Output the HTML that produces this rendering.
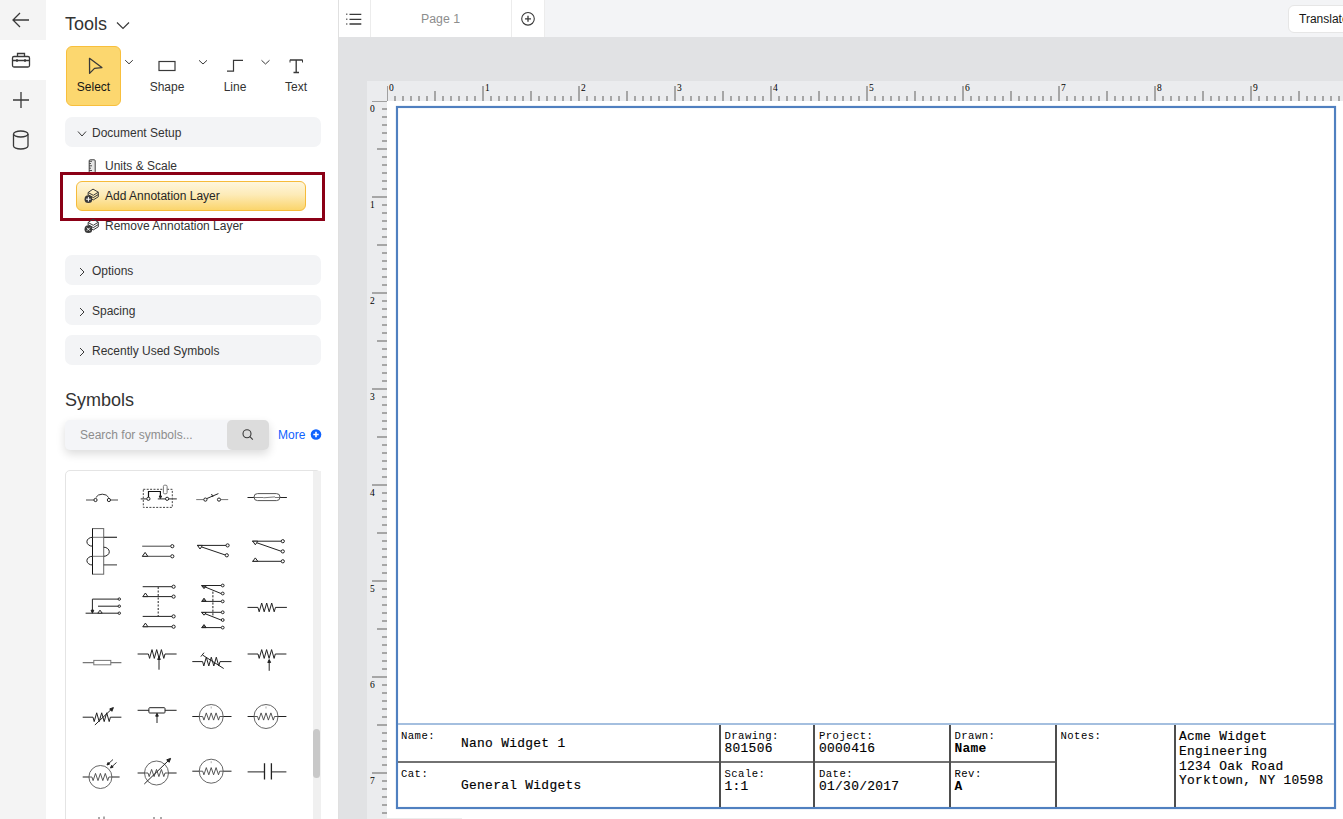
<!DOCTYPE html>
<html><head><meta charset="utf-8">
<style>
*{box-sizing:border-box;margin:0;padding:0}
html,body{width:1343px;height:819px;overflow:hidden;background:#fff;font-family:"Liberation Sans",sans-serif;color:#262626}
.a{position:absolute}
.t{position:absolute;white-space:nowrap;line-height:1}
#rail{left:0;top:0;width:46px;height:819px;background:#f4f4f4}
#railact{left:0;top:40px;width:46px;height:40px;background:#fff}
#panel{left:46px;top:0;width:292px;height:819px;background:#fff}
#pborder{left:338px;top:0;width:1px;height:819px;background:#e0e0e0}
.acc{position:absolute;left:65px;width:256px;height:30px;background:#f3f4f6;border-radius:7px}
.lbl{font-size:12px;color:#333}
#canvas{left:339px;top:37px;width:1004px;height:782px;background:#e1e2e4}
#topbar{left:339px;top:0;width:1004px;height:37px;background:#f3f4f6}
.mono{font-family:"Liberation Mono",monospace;color:#000}
</style></head>
<body>
<div class="a" id="rail"></div>
<div class="a" id="railact"></div>
<!-- rail icons -->
<svg class="a" style="left:0;top:0" width="46" height="160" viewBox="0 0 46 160" fill="none" stroke="#393939" stroke-width="1.3">
  <path d="M13 20 H29 M20 13 L13 20 L20 27"/>
  <rect x="12.5" y="56.5" width="17" height="10.5" rx="1.5"/>
  <path d="M17.5 56.5 V53.5 H24.5 V56.5 M12.5 60.5 H29.5 M17 59 V62 M25 59 V62"/>
  <path d="M21 92 V108 M13 100 H29"/>
  <ellipse cx="20.75" cy="134" rx="7.25" ry="3"/>
  <path d="M13.5 134 V146 A7.25 3 0 0 0 28 146 V134"/>
</svg>

<div class="a" id="panel"></div>
<div class="a" id="pborder"></div>

<div class="t" style="left:65px;top:14.6px;font-size:18px;color:#333">Tools</div>
<svg class="a" style="left:116px;top:21px" width="14" height="9" viewBox="0 0 14 9" fill="none" stroke="#393939" stroke-width="1.2"><path d="M1 1.5 L7 7.5 L13 1.5"/></svg>

<!-- select button -->
<div class="a" style="left:66px;top:46px;width:55px;height:60px;background:#fcd76f;border:1px solid #f8bf3c;border-radius:6px"></div>
<svg class="a" style="left:80px;top:52px" width="60" height="28" viewBox="0 0 60 28" fill="none" stroke="#393939" stroke-width="1.25" stroke-linejoin="round">
  <path d="M9.5 6.3 L21.9 15.6 L14.5 16.4 L9.6 21.4 Z" stroke-linejoin="round" stroke-width="1.3"/>
  <path d="M45.2 8.2 L49 11.8 L52.8 8.2" stroke-width="1"/>
</svg>
<div class="t lbl" style="left:76.5px;top:81.2px;width:34px;text-align:center;color:#161616">Select</div>

<svg class="a" style="left:130px;top:40px" width="200" height="40" viewBox="0 0 200 40" fill="none" stroke="#393939" stroke-width="1.2">
  <rect x="29" y="21.5" width="16" height="9"/>
  <path d="M69 20.3 L73 24 L77 20.3" stroke-width="1"/>
  <path d="M97 31.2 H103.5 V20.3 H113" />
  <path d="M131.5 20.3 L135.5 24 L139.5 20.3" stroke-width="1"/>
  <path d="M160 20 H172.5 M166.2 20 V32.5 M163.5 32.5 H169" stroke-width="1.35"/>
  <path d="M160 19.8 V22.5 M172.5 19.8 V22.5" stroke-width="1"/>
</svg>
<div class="t lbl" style="left:147px;top:81.2px;width:40px;text-align:center">Shape</div>
<div class="t lbl" style="left:215px;top:81.2px;width:40px;text-align:center">Line</div>
<div class="t lbl" style="left:276px;top:81.2px;width:40px;text-align:center">Text</div>

<!-- Document setup -->
<div class="acc" style="top:117px"></div>
<svg class="a" style="left:76px;top:128px" width="12" height="12" viewBox="0 0 12 12" fill="none" stroke="#393939" stroke-width="1"><path d="M2 3.5 L6 8 L10 3.5"/></svg>
<div class="t lbl" style="left:92px;top:127px">Document Setup</div>

<svg class="a" style="left:82px;top:155px" width="20" height="20" viewBox="0 0 20 20" fill="none" stroke="#3d3d3d" stroke-width="1"><rect x="7.2" y="4.8" width="6" height="13" rx="1" fill="#e6e6e6"/><path d="M7.2 6.3 H10 M7.2 8.5 H9 M7.2 10.8 H10 M7.2 13.2 H9 M7.2 15.5 H10" stroke-width="0.9"/></svg>
<div class="t lbl" style="left:105px;top:160.3px">Units &amp; Scale</div>

<!-- red highlight -->
<div class="a" style="left:60px;top:172px;width:265px;height:49px;border:3px solid #8b0016"></div>
<div class="a" style="left:76px;top:181px;width:230px;height:30px;border:1px solid #f6bb3a;border-radius:6px;background:linear-gradient(#fef6dd 0%,#fdebb8 45%,#fbd56c 100%)"></div>
<svg class="a" style="left:82px;top:186px" width="20" height="20" viewBox="0 0 20 20" fill="none" stroke="#393939" stroke-width="1" stroke-linejoin="round"><path d="M6.1 11.1 L11.3 13.9 L16.3 10.8 M6.1 8.8 L11.3 11.6 L16.3 8.5 M16.3 6.2 V10.8"/><path d="M11 3.1 L6.1 6.5 L11.3 9.3 L16.3 6.2 Z"/><path d="M6.1 6.5 V9"/><circle cx="6.4" cy="13.2" r="3.85" fill="#393939" stroke="none"/><path d="M6.4 10.9 V15.5 M4.1 13.2 H8.7" stroke="#fff" stroke-width="1"/></svg>
<div class="t lbl" style="left:105px;top:190px;color:#262626">Add Annotation Layer</div>

<svg class="a" style="left:82px;top:216px" width="20" height="20" viewBox="0 0 20 20" fill="none" stroke="#393939" stroke-width="1" stroke-linejoin="round"><path d="M6.1 11.1 L11.3 13.9 L16.3 10.8 M6.1 8.8 L11.3 11.6 L16.3 8.5 M16.3 6.2 V10.8"/><path d="M11 3.1 L6.1 6.5 L11.3 9.3 L16.3 6.2 Z"/><path d="M6.1 6.5 V9"/><circle cx="6.4" cy="13.2" r="3.85" fill="#393939" stroke="none"/><path d="M4.9 11.7 L7.9 14.7 M7.9 11.7 L4.9 14.7" stroke="#fff" stroke-width="1"/></svg>
<div class="t lbl" style="left:105px;top:220.3px">Remove Annotation Layer</div>

<div class="acc" style="top:255px"></div>
<div class="acc" style="top:295px"></div>
<div class="acc" style="top:335px"></div>
<svg class="a" style="left:76px;top:262px" width="12" height="100" viewBox="0 0 12 100" fill="none" stroke="#393939" stroke-width="1">
  <path d="M4 6 L8 10 L4 14"/>
  <path d="M4 46 L8 50 L4 54"/>
  <path d="M4 86 L8 90 L4 94"/>
</svg>
<div class="t lbl" style="left:92px;top:265.3px">Options</div>
<div class="t lbl" style="left:92px;top:305.3px">Spacing</div>
<div class="t lbl" style="left:92px;top:345.3px">Recently Used Symbols</div>

<div class="t" style="left:65px;top:390.8px;font-size:18px;color:#333">Symbols</div>

<!-- search -->
<div class="a" style="left:65px;top:420px;width:204px;height:30px;background:#f4f5f8;border-radius:5px;box-shadow:0 4px 10px rgba(0,0,0,0.14)"></div>
<div class="a" style="left:227px;top:420px;width:42px;height:30px;background:#dcdcdc;border-radius:5px"></div>
<svg class="a" style="left:240px;top:428px" width="16" height="16" viewBox="0 0 16 16" fill="none" stroke="#393939" stroke-width="1.1"><circle cx="7" cy="5.8" r="4"/><path d="M9.9 8.7 L12.8 11.6"/></svg>
<div class="t lbl" style="left:80px;top:428.8px;color:#8d8d8d">Search for symbols...</div>
<div class="t lbl" style="left:278px;top:428.8px;color:#0f62fe">More</div>
<svg class="a" style="left:309px;top:428px" width="14" height="14" viewBox="0 0 14 14"><circle cx="7" cy="6.5" r="5.3" fill="#0f62fe"/><path d="M7 3.8 V9.2 M4.3 6.5 H9.7" stroke="#fff" stroke-width="1.6"/></svg>

<!-- symbols panel -->
<div class="a" style="left:65px;top:470px;width:256px;height:360px;border:1px solid #e4e4e4;border-radius:5px;background:#fff"></div>
<div class="a" style="left:313px;top:471px;width:8px;height:350px;background:#f0f0f0"></div>
<div class="a" style="left:313px;top:729px;width:7px;height:49px;background:#c8c8c8;border-radius:4px"></div>
<svg class="a" style="left:65px;top:470px" width="256" height="349" viewBox="65 470 256 349" fill="none" stroke="#222" stroke-width="1"><path d="M86 500 H93.9 M110.5 500 H118" stroke="#888" stroke-width="1.4"/><path d="M95.8 497.6 A7.2 6 0 0 1 108.8 497.6" stroke="#333"/><circle cx="95.5" cy="500" r="1.6" fill="#fff"/><circle cx="108.9" cy="500" r="1.6" fill="#fff"/><rect x="143.3" y="489.3" width="29" height="18.1" stroke-dasharray="2 1.4" stroke="#444"/><path d="M140.7 498.8 H146.7 M157.8 498.8 H165.5 M168.8 498.8 H176.8" stroke="#555" stroke-width="1.2"/><circle cx="148.4" cy="498.8" r="1.6" fill="#fff"/><circle cx="167.1" cy="498.8" r="1.6" fill="#fff"/><rect x="163.4" y="485.2" width="3.7" height="8.6" rx="1.2" fill="#fff" stroke="#777"/><path d="M148.5 497.2 V491.5 H160.4 V496.5" stroke-width="1.2" stroke="#111"/><path d="M160.4 498.6 L159.2 496.0 L161.6 496.0 Z" fill="#222"/><path d="M196.2 499.6 H203.8 M220.6 499.6 H228.2" stroke="#777"/><path d="M206.5 498.7 L218.4 493.6 M211.5 494 L213 497"/><circle cx="205.4" cy="499.6" r="1.6" fill="#fff"/><circle cx="219" cy="499.6" r="1.6" fill="#fff"/><path d="M247.5 497.5 H254 M280 497.5 H286.9" stroke="#222"/><rect x="254" y="493.6" width="26" height="7" rx="3.5" fill="none" stroke="#555"/><path d="M254 497.5 H263.5 M263.5 497.8 L275 496.9 M275 497.5 H280" stroke="#555" stroke-width="0.8"/><rect x="92.5" y="528.6" width="11.2" height="45.6" stroke="#666"/><path d="M92.5 528.6 V574.2" stroke="#111"/><path d="M92.5 537.3 H117 M92.5 556.3 H103.7" stroke="#777"/><path d="M103.7 537.3 H117 M103.7 564.9 H117" stroke="#333"/><path d="M92.5 537.3 A5.6 4.45 0 0 0 92.5 546.2 M103.7 547.2 A5.6 4.55 0 0 1 103.7 556.3 M92.5 556.3 A5.6 4.35 0 0 0 92.5 565" stroke="#222"/><path d="M142.2 546.2 H170.5 M142.2 556.3 H170.5" stroke="#444"/><circle cx="172.3" cy="546.2" r="1.6" fill="#fff"/><circle cx="172.3" cy="556.3" r="1.6" fill="#fff"/><path d="M142.4 556.3 L145.1 552.4 L147.8 556.3 Z" fill="#fff"/><path d="M197 545.4 H226 M197 545.4 L225 554.9"/><circle cx="227.6" cy="545.4" r="1.6" fill="#fff"/><circle cx="226.8" cy="555.3" r="1.6" fill="#fff"/><path d="M197.5 545.4 L202.5 545.4 L200 549 Z" fill="#fff"/><path d="M252.3 541.2 H281 M252.3 541.2 L281 551.2 M252.3 561.3 H281"/><circle cx="282.8" cy="541.2" r="1.6" fill="#fff"/><circle cx="282.8" cy="551.4" r="1.6" fill="#fff"/><circle cx="282.8" cy="561.3" r="1.6" fill="#fff"/><path d="M252.8 541.2 L257.8 541.2 L255.3 544.8 Z" fill="#fff"/><path d="M252.8 561.3 L255.3 557.9 L257.8 561.3 Z" fill="#fff"/><path d="M92.4 599.1 H118.5 M98 606.2 H118.5 M85.6 613.2 H118.5 M92.4 599.1 V611"/><path d="M92.4 613.2 L91.1 610.2 L93.8 610.2 Z" fill="#222"/><circle cx="119.3" cy="599.1" r="1.2" fill="#fff"/><circle cx="119.3" cy="606.2" r="1.2" fill="#fff"/><circle cx="119.3" cy="613.2" r="1.2" fill="#fff"/><path d="M97.8 613.2 L100.0 610.2 L102.2 613.2 Z" fill="#fff"/><path d="M142.7 586.7 H172 M142.7 596.6 H172 M142.7 616.4 H172 M142.7 626.7 H172"/><path d="M158.2 587 V616" stroke-dasharray="2 1.5"/><circle cx="173.6" cy="586.7" r="1.6" fill="#fff"/><circle cx="173.6" cy="596.6" r="1.6" fill="#fff"/><circle cx="173.6" cy="616.4" r="1.6" fill="#fff"/><circle cx="173.6" cy="626.7" r="1.6" fill="#fff"/><path d="M142.9 596.6 L145.4 593.0 L147.9 596.6 Z" fill="#fff"/><path d="M142.9 626.7 L145.4 623.1 L147.9 626.7 Z" fill="#fff"/><path d="M201.5 585.5 H221 M201.5 585.5 L221 593.5 M201.5 601.4 H221 M201.5 612.3 H221 M201.5 612.3 L221 620 M201.5 627.6 H221"/><path d="M212.9 591.6 V617" stroke-dasharray="2.2 1.4"/><circle cx="222.7" cy="585.5" r="1.4" fill="#fff"/><circle cx="222.7" cy="593.5" r="1.4" fill="#fff"/><circle cx="222.7" cy="601.4" r="1.4" fill="#fff"/><circle cx="222.7" cy="612.3" r="1.4" fill="#fff"/><circle cx="222.7" cy="620" r="1.4" fill="#fff"/><circle cx="222.7" cy="627.6" r="1.4" fill="#fff"/><path d="M201.8 585.8 L206.3 585.8 L204 588.6 Z" fill="#666"/><path d="M201.8 612.6 L206.3 612.6 L204 615.2 Z" fill="#fff"/><path d="M201.8 601.4 L204.0 598.1999999999999 L206.20000000000002 601.4 Z" fill="#666"/><path d="M201.8 627.6 L204.0 624.6 L206.20000000000002 627.6 Z" fill="#666"/><path d="M247.5 607.4 H257.9 M257.9 607.4 L259.2 611.8 L261.7 603.0 L264.2 611.8 L266.7 603.0 L269.2 611.8 L271.7 603.0 L274.2 611.8 L275.5 607.4 M275.5 607.4 H286.9"/><path d="M82.7 662.6 H93.8 M110.8 662.6 H121.4" stroke="#777" stroke-width="1.3"/><rect x="93.8" y="660.4" width="17" height="4.4" stroke="#777"/><path d="M137.6 654 H148.4 M148.4 654.0 L149.6 658.4 L152.0 649.6 L154.3 658.4 L156.7 649.6 L159.1 658.4 L161.4 649.6 L163.8 658.4 L165.0 654.0 M165 654 H176.6 M159 669.7 V659"/><path d="M159.0 656.5 L160.3 659.5 L157.7 659.5 Z" fill="#222"/><path d="M192.3 661.6 H202.6 M202.6 661.6 L203.8 666.0 L206.3 657.2 L208.8 666.0 L211.3 657.2 L213.8 666.0 L216.3 657.2 L218.8 666.0 L220.0 661.6 M220 661.6 H231.5 M202.8 655.2 L223.7 668.5 M200.9 656.6 L204 652.7"/><path d="M247.6 654 H258 M258.0 654.0 L259.2 658.4 L261.7 649.6 L264.2 658.4 L266.6 649.6 L269.1 658.4 L271.6 649.6 L274.1 658.4 L275.3 654.0 M275.3 654 H286.4 M269.2 670.8 V662"/><path d="M269.2 659.5 L270.6 662.5 L267.8 662.5 Z" fill="#222"/><path d="M82.7 717.2 H93 M93.0 717.2 L94.2 721.6 L96.7 712.8 L99.2 721.6 L101.7 712.8 L104.2 721.6 L106.7 712.8 L109.2 721.6 L110.4 717.2 M110.4 717.2 H121.4 M94.9 725 L111.5 709.2"/><path d="M113.4 707.6 L111.9 711.3 L109.7 708.9 Z" fill="#222"/><path d="M137.6 710.3 H148.9 M165 710.3 H176.6 M157 723 V715.5"/><rect x="148.9" y="707.7" width="16.1" height="5.3" rx="0.8"/><path d="M157.0 713.2 L158.3 716.2 L155.7 716.2 Z" fill="#222"/><path d="M192.3 716.5 H199.2 M223.2 716.5 H231.5"/><circle cx="211.2" cy="716.5" r="12" stroke="#555" stroke-width="0.9"/><path d="M199.2 716.5 H202.7 M202.7 716.5 L203.9 720.1 L206.3 712.9 L208.8 720.1 L211.2 712.9 L213.6 720.1 L216.1 712.9 L218.5 720.1 L219.7 716.5 M219.7 716.5 H223.2" stroke="#444" stroke-width="0.9"/><path d="M211.2 706.5 V708.5" stroke="#999" stroke-width="0.8"/><path d="M247.6 716.5 H254 M278 716.5 H286.4"/><circle cx="266" cy="716.5" r="12" stroke="#555" stroke-width="0.9"/><path d="M254 716.5 H257.5 M257.5 716.5 L258.7 720.1 L261.1 712.9 L263.6 720.1 L266.0 712.9 L268.4 720.1 L270.9 712.9 L273.3 720.1 L274.5 716.5 M274.5 716.5 H278" stroke="#444" stroke-width="0.9"/><path d="M266 706.5 V708.5" stroke="#999" stroke-width="0.8"/><path d="M192.3 771.2 H199.2 M223.2 771.2 H231.5"/><circle cx="211.2" cy="771.2" r="12" stroke="#555" stroke-width="0.9"/><path d="M199.2 771.2 H202.7 M202.7 771.2 L203.9 774.8 L206.3 767.6 L208.8 774.8 L211.2 767.6 L213.6 774.8 L216.1 767.6 L218.5 774.8 L219.7 771.2 M219.7 771.2 H223.2" stroke="#444" stroke-width="0.9"/><path d="M211.2 761.2 V763.2" stroke="#999" stroke-width="0.8"/><path d="M82.7 777 H88.9 M111.9 777 H119.6"/><circle cx="100.4" cy="777" r="11.5" stroke="#555" stroke-width="0.9"/><path d="M88.9 777 H91.9 M91.9 777.0 L93.1 780.6 L95.5 773.4 L98.0 780.6 L100.4 773.4 L102.8 780.6 L105.3 773.4 L107.7 780.6 L108.9 777.0 M108.9 777 H111.9" stroke="#444" stroke-width="0.9"/><path d="M113 759.5 L107.5 764.5 M116.5 762.5 L111 767.5" stroke-width="0.9"/><path d="M107.0 765.0 L108.1 762.4 L109.7 764.1 Z" fill="#222"/><path d="M110.5 768.0 L111.6 765.4 L113.2 767.1 Z" fill="#222"/><path d="M137.6 773 H144.5 M168.5 773 H176.6"/><circle cx="156.5" cy="773" r="12" stroke="#555" stroke-width="0.9"/><path d="M144.5 773 H148.0 M148.0 773.0 L149.2 776.6 L151.6 769.4 L154.1 776.6 L156.5 769.4 L158.9 776.6 L161.4 769.4 L163.8 776.6 L165.0 773.0 M165.0 773 H168.5" stroke="#444" stroke-width="0.9"/><path d="M144.3 784 L168.5 760.5"/><path d="M170.6 758.4 L169.1 762.3 L166.7 759.8 Z" fill="#222"/><path d="M247.6 771.9 H264.5 M271.4 771.9 H286.4"/><path d="M264.5 763.3 V779.5 M271.4 763.3 V779.5" stroke-width="1.3"/><path d="M99 817 V819 M104 816.5 V819 M154 817 V819 M161 817 V819" stroke="#555"/></svg>

<!-- canvas -->
<div class="a" id="topbar"></div>
<div class="a" style="left:339px;top:0;width:205px;height:37px;background:#fff"></div>
<div class="a" style="left:370px;top:0;width:1px;height:37px;background:#ececec"></div>
<div class="a" style="left:511px;top:0;width:1px;height:37px;background:#ececec"></div>
<div class="a" style="left:544px;top:0;width:1px;height:37px;background:#ececec"></div>
<svg class="a" style="left:339px;top:0" width="32" height="37" viewBox="0 0 32 37" stroke="#393939" stroke-width="1.3">
  <path d="M10.5 14.3 H22.3 M10.5 19.3 H22.3 M10.5 24 H22.3"/>
  <path d="M7.3 14.3 H8.3 M7.3 19.3 H8.3 M7.3 24 H8.3" stroke-width="1.6"/>
</svg>
<div class="t" style="left:421px;top:12.7px;font-size:12.3px;color:#8d8d8d">Page 1</div>
<svg class="a" style="left:518px;top:9px" width="20" height="20" viewBox="0 0 20 20" fill="none" stroke="#393939" stroke-width="1.1"><circle cx="10" cy="9.8" r="6.3"/><path d="M10 6.8 V12.8 M7 9.8 H13" stroke-width="1.3"/></svg>
<div class="a" style="left:1288px;top:5px;width:80px;height:28px;background:#fff;border:1px solid #e6e6e6;border-radius:6px"></div>
<div class="t lbl" style="left:1299px;top:12.9px;color:#161616">Translate</div>

<div class="a" id="canvas"></div>
<!-- rulers -->
<div class="a" style="left:367px;top:81px;width:976px;height:20px;background:#ebecee"></div>
<div class="a" style="left:367px;top:81px;width:20px;height:738px;background:#ebecee"></div>
<svg class="a" style="left:0;top:0" width="1343" height="819" viewBox="0 0 1343 819"><path d="M395 96V101M403 96V101M411 96V101M419 96V101M427 96V101M435 91V101M443 96V101M451 96V101M459 96V101M467 96V101M475 96V101M483 86V101M491 96V101M499 96V101M507 96V101M515 96V101M523 96V101M531 91V101M539 96V101M547 96V101M555 96V101M563 96V101M571 96V101M579 86V101M587 96V101M595 96V101M603 96V101M611 96V101M619 96V101M627 91V101M635 96V101M643 96V101M651 96V101M659 96V101M667 96V101M675 86V101M683 96V101M691 96V101M699 96V101M707 96V101M715 96V101M723 91V101M731 96V101M739 96V101M747 96V101M755 96V101M763 96V101M771 86V101M779 96V101M787 96V101M795 96V101M803 96V101M811 96V101M819 91V101M827 96V101M835 96V101M843 96V101M851 96V101M859 96V101M867 86V101M875 96V101M883 96V101M891 96V101M899 96V101M907 96V101M915 91V101M923 96V101M931 96V101M939 96V101M947 96V101M955 96V101M963 86V101M971 96V101M979 96V101M987 96V101M995 96V101M1003 96V101M1011 91V101M1019 96V101M1027 96V101M1035 96V101M1043 96V101M1051 96V101M1059 86V101M1067 96V101M1075 96V101M1083 96V101M1091 96V101M1099 96V101M1107 91V101M1115 96V101M1123 96V101M1131 96V101M1139 96V101M1147 96V101M1155 86V101M1163 96V101M1171 96V101M1179 96V101M1187 96V101M1195 96V101M1203 91V101M1211 96V101M1219 96V101M1227 96V101M1235 96V101M1243 96V101M1251 86V101M1259 96V101M1267 96V101M1275 96V101M1283 96V101M1291 96V101M1299 91V101M1307 96V101M1315 96V101M1323 96V101M1331 96V101M1339 96V101M382 109H387M382 117H387M382 125H387M382 133H387M382 141H387M377 149H387M382 157H387M382 165H387M382 173H387M382 181H387M382 189H387M372 197H387M382 205H387M382 213H387M382 221H387M382 229H387M382 237H387M377 245H387M382 253H387M382 261H387M382 269H387M382 277H387M382 285H387M372 293H387M382 301H387M382 309H387M382 317H387M382 325H387M382 333H387M377 341H387M382 349H387M382 357H387M382 365H387M382 373H387M382 381H387M372 389H387M382 397H387M382 405H387M382 413H387M382 421H387M382 429H387M377 437H387M382 445H387M382 453H387M382 461H387M382 469H387M382 477H387M372 485H387M382 493H387M382 501H387M382 509H387M382 517H387M382 525H387M377 533H387M382 541H387M382 549H387M382 557H387M382 565H387M382 573H387M372 581H387M382 589H387M382 597H387M382 605H387M382 613H387M382 621H387M377 629H387M382 637H387M382 645H387M382 653H387M382 661H387M382 669H387M372 677H387M382 685H387M382 693H387M382 701H387M382 709H387M382 717H387M377 725H387M382 733H387M382 741H387M382 749H387M382 757H387M382 765H387M372 773H387M382 781H387M382 789H387M382 797H387M382 805H387M382 813H387M377 821H387" stroke="#a6a6a6" stroke-width="2" fill="none"/><path d="M387.5 86V101 M372 101.5H387" stroke="#a0a0a0" stroke-width="1" fill="none"/><g font-family="Liberation Serif" font-size="9.5" fill="#000"><text x="389.1" y="91" >0</text><text x="485.1" y="91" >1</text><text x="581.1" y="91" >2</text><text x="677.1" y="91" >3</text><text x="773.1" y="91" >4</text><text x="869.1" y="91" >5</text><text x="965.1" y="91" >6</text><text x="1061.1" y="91" >7</text><text x="1157.1" y="91" >8</text><text x="1253.1" y="91" >9</text><text x="370.1" y="112">0</text><text x="370.1" y="208">1</text><text x="370.1" y="304">2</text><text x="370.1" y="400">3</text><text x="370.1" y="496">4</text><text x="370.1" y="592">5</text><text x="370.1" y="688">6</text><text x="370.1" y="784">7</text></g></svg>
<!-- paper -->
<div class="a" style="left:387px;top:101px;width:956px;height:718px;background:#fff"></div>
<div class="a" style="left:396px;top:106px;width:940px;height:703px;border:2px solid #5080c0;box-shadow:0 0 1px rgba(80,128,192,0.6),inset 0 0 1px rgba(80,128,192,0.6)"></div>

<div class="a" style="left:398px;top:723px;width:936px;height:2px;background:#a4bfdf"></div>
<div class="a" style="left:398px;top:761px;width:658px;height:2px;background:#727272"></div>
<div class="a" style="left:719px;top:725px;width:1.6px;height:82px;background:#4e4e4e"></div>
<div class="a" style="left:813px;top:725px;width:1.6px;height:82px;background:#4e4e4e"></div>
<div class="a" style="left:949px;top:725px;width:1.6px;height:82px;background:#4e4e4e"></div>
<div class="a" style="left:1055px;top:725px;width:1.6px;height:82px;background:#4e4e4e"></div>
<div class="a" style="left:1174px;top:725px;width:1.6px;height:82px;background:#4e4e4e"></div>
<div class="t mono" style="left:401px;top:731.38px;font-size:10.6px;letter-spacing:0.44px;">Name:</div>
<div class="t mono" style="left:461px;top:738.12px;font-size:12.9px;letter-spacing:0.3px;-webkit-text-stroke:0.15px #000;">Nano Widget 1</div>
<div class="t mono" style="left:401px;top:769.38px;font-size:10.6px;letter-spacing:0.44px;">Cat:</div>
<div class="t mono" style="left:461px;top:779.92px;font-size:12.9px;letter-spacing:0.3px;-webkit-text-stroke:0.15px #000;">General Widgets</div>
<div class="t mono" style="left:724.5px;top:731.38px;font-size:10.6px;letter-spacing:0.44px;">Drawing:</div>
<div class="t mono" style="left:724.5px;top:742.82px;font-size:12.9px;letter-spacing:0.3px;-webkit-text-stroke:0.15px #000;">801506</div>
<div class="t mono" style="left:724.5px;top:769.38px;font-size:10.6px;letter-spacing:0.44px;">Scale:</div>
<div class="t mono" style="left:724.5px;top:781.12px;font-size:12.9px;letter-spacing:0.3px;-webkit-text-stroke:0.15px #000;">1:1</div>
<div class="t mono" style="left:819px;top:731.38px;font-size:10.6px;letter-spacing:0.44px;">Project:</div>
<div class="t mono" style="left:819px;top:742.82px;font-size:12.9px;letter-spacing:0.3px;-webkit-text-stroke:0.15px #000;">0000416</div>
<div class="t mono" style="left:819px;top:769.38px;font-size:10.6px;letter-spacing:0.44px;">Date:</div>
<div class="t mono" style="left:819px;top:781.12px;font-size:12.9px;letter-spacing:0.3px;-webkit-text-stroke:0.15px #000;">01/30/2017</div>
<div class="t mono" style="left:954.5px;top:731.38px;font-size:10.6px;letter-spacing:0.44px;">Drawn:</div>
<div class="t mono" style="left:954.5px;top:742.82px;font-size:12.9px;letter-spacing:0.3px;font-weight:bold;">Name</div>
<div class="t mono" style="left:954.5px;top:769.38px;font-size:10.6px;letter-spacing:0.44px;">Rev:</div>
<div class="t mono" style="left:954.5px;top:781.12px;font-size:12.9px;letter-spacing:0.3px;font-weight:bold;">A</div>
<div class="t mono" style="left:1060.5px;top:731.38px;font-size:10.6px;letter-spacing:0.44px;">Notes:</div>
<div class="t mono" style="left:1179px;top:731.12px;font-size:12.9px;letter-spacing:0.3px;-webkit-text-stroke:0.15px #000;">Acme Widget</div>
<div class="t mono" style="left:1179px;top:745.89px;font-size:12.9px;letter-spacing:0.3px;-webkit-text-stroke:0.15px #000;">Engineering</div>
<div class="t mono" style="left:1179px;top:760.66px;font-size:12.9px;letter-spacing:0.3px;-webkit-text-stroke:0.15px #000;">1234 Oak Road</div>
<div class="t mono" style="left:1179px;top:775.43px;font-size:12.9px;letter-spacing:0.3px;-webkit-text-stroke:0.15px #000;">Yorktown, NY 10598</div>
<div class="a" style="left:373px;top:818px;width:89px;height:1px;background:#ececec"></div>
</body></html>
